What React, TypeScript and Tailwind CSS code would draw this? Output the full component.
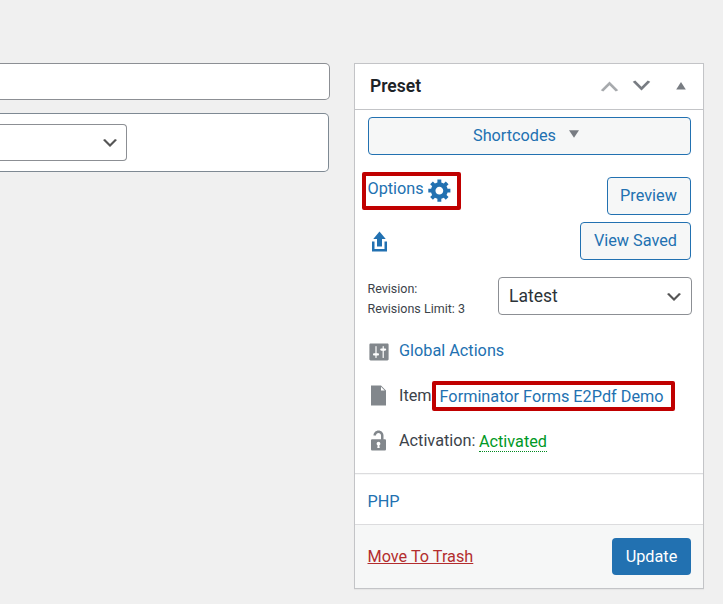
import type { ReactNode } from 'react';

interface IconProps {
    size: number;
    className?: string;
}

const Icon = ({ size, className = '', d }: IconProps & { d: string }) => (
    <svg width={size} height={size} viewBox="0 0 20 20" fill="currentColor" className={`shrink-0 ${className}`}>
        <path d={d} />
    </svg>
);

const ChevronDown = (props: IconProps) => <Icon {...props} d="M5 6l5 5 5-5 2 1-7 7-7-7z" />;

const ChevronUp = (props: IconProps) => <Icon {...props} d="M15 14l-5-5-5 5-2-1 7-7 7 7z" />;

const GearIcon = (props: IconProps) => (
    <Icon
        {...props}
        d="M18 12h-2.18c-.17.7-.44 1.35-.81 1.93l1.54 1.54-2.1 2.1-1.54-1.54c-.58.36-1.23.63-1.91.79V19H8v-2.18c-.68-.16-1.33-.43-1.91-.79l-1.54 1.54-2.12-2.12 1.54-1.54c-.36-.58-.63-1.23-.79-1.91H1V9.03h2.17c.16-.7.44-1.35.8-1.94L2.43 5.55l2.1-2.1 1.54 1.54c.58-.37 1.24-.64 1.93-.81V2h3v2.18c.68.16 1.33.43 1.91.79l1.54-1.54 2.12 2.12-1.54 1.54c.36.59.64 1.24.8 1.94H18V12zm-8.5 1.5c1.66 0 3-1.34 3-3s-1.34-3-3-3-3 1.34-3 3 1.34 3 3 3z"
    />
);

const ExportIcon = (props: IconProps) => (
    <Icon {...props} d="M8 14V8H5l5-6 5 6h-3v6H8zm-2 2v-6H4v8h12.01v-8H14v6H6z" />
);

const SlidersIcon = (props: IconProps) => (
    <Icon
        {...props}
        d="M18 16V4c0-.55-.45-1-1-1H3c-.55 0-1 .45-1 1v12c0 .55.45 1 1 1h14c.55 0 1-.45 1-1zM8 11h1c.55 0 1 .45 1 1s-.45 1-1 1H8v1.5c0 .28-.22.5-.5.5s-.5-.22-.5-.5V13H6c-.55 0-1-.45-1-1s.45-1 1-1h1V5.5c0-.28.22-.5.5-.5s.5.22.5.5V11zm5-2h-1c-.55 0-1-.45-1-1s.45-1 1-1h1V5.5c0-.28.22-.5.5-.5s.5.22.5.5V7h1c.55 0 1 .45 1 1s-.45 1-1 1h-1v5.5c0 .28-.22.5-.5.5s-.5-.22-.5-.5V9z"
    />
);

const FileIcon = (props: IconProps) => <Icon {...props} d="M12 2l4 4v12H4V2h8zm0 4h3l-3-3v3z" />;

const UnlockIcon = (props: IconProps) => (
    <Icon
        {...props}
        d="M12 9V6c0-1.1-.9-2-2-2s-2 .9-2 2H6c0-2.21 1.79-4 4-4s4 1.79 4 4v3h1c.55 0 1 .45 1 1v7c0 .55-.45 1-1 1H5c-.55 0-1-.45-1-1v-7c0-.55.45-1 1-1h7zm-1 7l-.36-2.15c.51-.24.86-.75.86-1.35 0-.83-.67-1.5-1.5-1.5s-1.5.67-1.5 1.5c0 .6.35 1.11.86 1.35L9 16h2z"
    />
);

const OutlineButton = ({ children, className = '' }: { children: ReactNode; className?: string }) => (
    <button className={`flex h-[38px] items-center justify-center rounded-[4px] border border-[#2271b1] bg-[#f6f7f7] text-[#2271b1] ${className}`}>
        {children}
    </button>
);

export default function App() {
    return (
        <div className="flex h-[604px] w-[723px] gap-6 overflow-hidden bg-[#f0f0f0] pt-[63px] font-['Roboto',sans-serif] text-[16.25px] leading-5 text-[#3c434a]">
            {/* Editor column, cut off on the left */}
            <div className="w-[330px] shrink-0">
                <div className="h-[37px] rounded-r-[5px] border border-l-0 border-[#8c8f94] bg-white" />
                <div className="mt-[13px] h-[59px] w-[329px] rounded-r-[5px] border border-l-0 border-[#7e8993] bg-white pt-[10px]">
                    <div className="flex h-[37px] w-[127px] items-center justify-end rounded-r-[4px] border border-l-0 border-[#8c8f94] pr-[6px]">
                        <ChevronDown size={20} className="mt-px text-[#555]" />
                    </div>
                </div>
            </div>

            {/* Preset meta box */}
            <div className="flex h-[526px] w-[350px] shrink-0 flex-col border border-[#c3c4c7] bg-white shadow-[0_1px_1px_rgba(0,0,0,0.04)]">
                <div className="flex h-[46px] shrink-0 items-center border-b border-[#c3c4c7] pb-[2px] pl-[15px] pr-[17px]">
                    <h2 className="flex-1 text-[17.5px] font-semibold text-[#1d2327]">Preset</h2>
                    <ChevronUp size={25} className="mr-[7px] mt-px text-[#a7aaad]" />
                    <ChevronDown size={25} className="mr-[22px] text-[#787c82]" />
                    <svg width="10" height="8" viewBox="0 0 10 8" fill="#787c82">
                        <path d="M5 0l4.800 7.600H0.200z" />
                    </svg>
                </div>

                <div className="h-[364px] shrink-0 border-b border-[#dcdcde] px-[13px] pt-[7px]">
                    <OutlineButton className="w-[323px] pr-[7px]">
                        <span>Shortcodes</span>
                        <svg width="10" height="8" viewBox="0 0 10 8" fill="#787c82" className="mb-1 ml-[13px]">
                            <path d="M0 0.200h10L5 7.800z" />
                        </svg>
                    </OutlineButton>

                    <div className="mt-[22px] flex h-[38px] w-[323px] items-start justify-between">
                        <div className="relative -ml-[0.5px] flex items-start text-[#2271b1]">
                            <span className="mt-[2px]">Options</span>
                            <GearIcon size={26} className="ml-[3.5px]" />
                            <span className="absolute -left-[5.5px] -top-[5px] h-[38px] w-[99px] rounded-[2px] border-4 border-[#c00000]" />
                        </div>
                        <OutlineButton className="w-[84px] pr-px">Preview</OutlineButton>
                    </div>

                    <div className="mt-[7px] flex h-[38px] w-[323px] items-center justify-between">
                        <ExportIcon size={25} className="-ml-px mt-px text-[#2271b1]" />
                        <OutlineButton className="w-[111px]">View Saved</OutlineButton>
                    </div>

                    <div className="mt-[17px] flex h-[38px] items-start justify-between">
                        <div className="-ml-[0.5px] pt-[2px] text-[12.5px]">
                            <p>Revision:</p>
                            <p>Revisions Limit: 3</p>
                        </div>
                        <div className="mr-[-2px] flex h-[38px] w-[194px] items-center justify-between rounded-[4px] border border-[#8c8f94] pl-[10px] pr-[7px] text-[17.5px] text-[#2c3338]">
                            <span>Latest</span>
                            <ChevronDown size={20} className="mt-px text-[#555]" />
                        </div>
                    </div>

                    <div className="mt-[26px] flex h-5 items-center">
                        <SlidersIcon size={24} className="-ml-px mr-2 mt-[2px] text-[#82878c]" />
                        <span className="text-[#2271b1]">Global Actions</span>
                    </div>
                    <div className="mt-[25px] flex h-5 items-center">
                        <FileIcon size={25} className="-ml-[2px] mr-2 -mt-px text-[#82878c]" />
                        <span>Item:</span>
                        <span className="relative ml-1 mt-px text-[#2271b1]">
                            Forminator Forms E2Pdf Demo
                            <span className="absolute -left-2 -top-[6px] h-[30px] w-[243px] rounded-[2px] border-4 border-[#c00000]" />
                        </span>
                    </div>
                    <div className="mt-[25px] flex h-5 items-center">
                        <UnlockIcon size={25} className="-ml-[2px] mr-2 -mt-px text-[#82878c]" />
                        <span>Activation:</span>
                        <span className="ml-[3.5px] mt-[2px] h-5 border-b border-dotted border-[#008a20] text-[#009926]">Activated</span>
                    </div>
                </div>

                <div className="flex h-[51px] shrink-0 items-center border-b border-t border-b-[#dcdcde] border-t-[#f6f7f7] px-[12.5px] pt-1">
                    <span className="text-[#2271b1]">PHP</span>
                </div>
                <div className="flex flex-1 items-center justify-between bg-[#f6f7f7] pl-[12.5px] pr-3">
                    <a className="text-[#b32d2e] underline">Move To Trash</a>
                    <button className="h-[37px] w-[79px] rounded-[4px] bg-[#2271b1] text-white">Update</button>
                </div>
            </div>
        </div>
    );
}
